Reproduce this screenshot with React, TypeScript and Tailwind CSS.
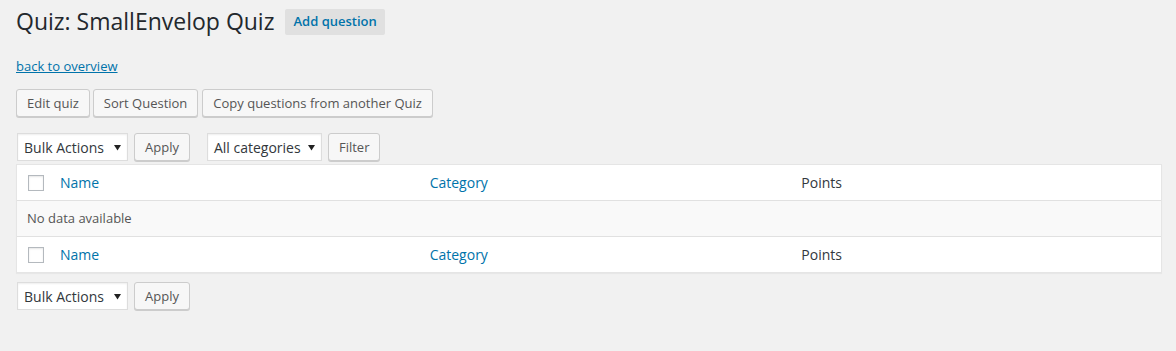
import React from "react";

const Btn: React.FC<{ children: React.ReactNode; className?: string }> = ({ children, className = "" }) => (
	<button
		className={`h-7 px-[10px] pb-px text-[13px] leading-[26px] text-[#555] bg-[#f7f7f7] border border-[#cccccc] rounded-[3px] shadow-[0_1px_0_#cccccc] whitespace-nowrap ${className}`}
	>
		{children}
	</button>
);

const FakeSelect: React.FC<{ label: string; width: string }> = ({ label, width }) => (
	<div
		className={`flex items-center justify-between h-7 pl-[6px] pr-[6px] bg-white border border-[#dddddd] shadow-[inset_0_1px_2px_rgba(0,0,0,0.07)] text-[14px] text-[#32373c] ${width}`}
	>
		<span>{label}</span>
		<svg width="7" height="7" viewBox="0 0 7 7">
			<path d="M0 1h7L3.5 6.5z" fill="#222" />
		</svg>
	</div>
);

const Check: React.FC = () => (
	<div className="w-4 h-4 bg-white border border-[#b4b9be] shadow-[inset_0_1px_2px_rgba(0,0,0,0.1)]" />
);

const HeadRow: React.FC<{ top?: boolean }> = ({ top }) => (
	<div
		className={`grid grid-cols-[35px_1fr_1fr_1fr] h-[36px] items-center bg-white ${top ? "border-b border-[#e1e1e1]" : "border-t border-[#e1e1e1]"}`}
	>
		<div className="pl-[11px]">
			<Check />
		</div>
		<div className="pl-2 pb-px text-[14px] text-[#0073aa]">Name</div>
		<div className="pl-2 pb-px text-[14px] text-[#0073aa]">Category</div>
		<div className="pl-[10px] text-[14px] text-[#32373c]">Points</div>
	</div>
);

const App: React.FC = () => {
	return (
		<div className="min-h-screen bg-[#f1f1f1] pl-4 pr-[14px] font-['Open_Sans',sans-serif] text-[#444]">
			{/* title */}
			<div className="flex items-center pt-[7px]">
				<h1 className="text-[23px] leading-[29px] text-[#23282d]">Quiz: SmallEnvelop Quiz</h1>
				<a className="ml-[11px] h-[26px] px-2 flex items-center bg-[#e0e0e0] text-[13px] font-semibold text-[#0073aa] rounded-[2px]">
					Add question
				</a>
			</div>

			<p className="mt-[21px] text-[13px] leading-[18px]">
				<a className="text-[#0073aa] underline">back to overview</a>
			</p>

			<div className="flex gap-[3px] mt-[14px]">
				<Btn>Edit quiz</Btn>
				<Btn>Sort Question</Btn>
				<Btn className="ml-px">Copy questions from another Quiz</Btn>
			</div>

			{/* filters */}
			<div className="flex items-center mt-[16px] pl-px">
				<FakeSelect label="Bulk Actions" width="w-[111px]" />
				<Btn className="ml-[6px]">Apply</Btn>
				<FakeSelect label="All categories" width="w-[115px] ml-[17px]" />
				<Btn className="ml-[6px]">Filter</Btn>
			</div>

			{/* table */}
			<div className="mt-[3px] border border-[#e5e5e5] shadow-[0_1px_1px_rgba(0,0,0,0.04)] bg-white">
				<HeadRow top />
				<div className="h-[35px] flex items-center bg-[#f9f9f9] pl-[10px] text-[13px] text-[#555]">No data available</div>
				<HeadRow />
			</div>

			<div className="flex items-center mt-[9px] pl-px">
				<FakeSelect label="Bulk Actions" width="w-[111px]" />
				<Btn className="ml-[6px]">Apply</Btn>
			</div>
		</div>
	);
};

export default App;
